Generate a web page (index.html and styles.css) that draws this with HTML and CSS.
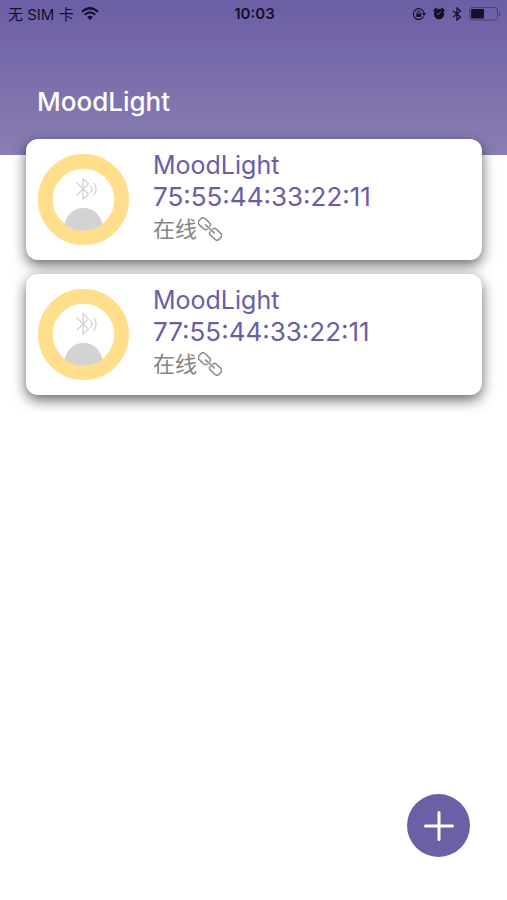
FILE: index.html
```html
<!DOCTYPE html>
<html lang="zh-CN">
<head>
<meta charset="utf-8">
<meta name="viewport" content="width=device-width, initial-scale=1">
<title>MoodLight</title>
<link rel="stylesheet" href="styles.css">
</head>
<body>
<svg class="defs" aria-hidden="true">
  <symbol id="lamp" viewBox="0 0 90 90">
    <clipPath id="lamp-hole"><circle cx="45" cy="45" r="31"/></clipPath>
    <circle cx="45" cy="45" r="37.7" fill="#fff" stroke="#ffdf8c" stroke-width="14.6"/>
    <circle cx="45" cy="72" r="18.7" fill="#d3d3d3" clip-path="url(#lamp-hole)"/>
    <g fill="none" stroke="#d2cfd1" stroke-width="1.2" stroke-linecap="round" stroke-linejoin="round">
      <path d="M38.5 28.5 50 39.5 44.5 44.5V24.5L50 29.5 38.5 40.5"/>
      <path d="M52 31.5Q54.5 34.5 52 38M55.500 29Q59.500 34.500 55.500 40.500"/>
    </g>
  </symbol>
  <symbol id="link" viewBox="0 0 24 24">
    <g transform="rotate(43 12 12)" fill="none" stroke="#8b8b8b" stroke-width="1.5" stroke-linecap="round" stroke-linejoin="round">
      <path d="M10 14V14.500Q9.500 16.200 7.500 16.200H1.500Q-1.700 16.200-1.700 13V11Q-1.700 7.800 1.500 7.800H7.500Q9.500 7.800 10 9.500V10"/>
      <path d="M14 10V9.500Q14.500 7.800 16.500 7.800H22.500Q25.700 7.800 25.700 11V13Q25.700 16.200 22.500 16.200H16.500Q14.500 16.200 14 14.500V14"/>
      <path d="M6 12H18"/>
    </g>
  </symbol>
</svg>
<header class="header">
  <div class="status">
    <div class="status-side">
      <span>无 SIM 卡</span>
      <svg width="18" height="13" viewBox="0 0 18 13" aria-hidden="true">
        <g fill="none" stroke="#15112a" stroke-width="2.200">
          <path d="M1 4.800Q9-2.300 17 4.800"/>
          <path d="M3.700 7.700Q9 3 14.300 7.700"/>
        </g>
        <path d="M6 10Q9 7.400 12 10L9 13Z" fill="#15112a"/>
      </svg>
    </div>
    <time class="clock">10:03</time>
    <div class="status-side status-right">
      <svg width="14" height="14" viewBox="0 0 14 14" aria-hidden="true">
        <path d="M11.600 9.500A5.400 5.400 0 1 1 12 5.500" fill="none" stroke="#15112a" stroke-width="1.200"/>
        <path d="M10 6h4l-2 3z" fill="#15112a"/>
        <path d="M4.300 6.500h5v3.500h-5z" fill="#15112a"/>
        <path d="M5.300 6.500V5Q6.800 2.800 8.300 5V6.500" fill="none" stroke="#15112a"/>
      </svg>
      <svg width="12" height="13" viewBox="0 0 12 13" aria-hidden="true">
        <circle cx="6" cy="7" r="5.200" fill="#15112a"/>
        <path d="M1.200 3.400 3.200 1.600M10.800 3.400 8.800 1.600" stroke="#15112a" stroke-width="1.800" stroke-linecap="round"/>
        <path d="M7.500 4.500 6 7.200H4" fill="none" stroke="#7467a9" stroke-width=".8"/>
      </svg>
      <svg width="10" height="14" viewBox="0 0 10 14" aria-hidden="true">
        <path d="M1 4 8.500 10 5 13V1L8.500 4 1 10" fill="none" stroke="#15112a" stroke-width="1.300"/>
      </svg>
      <svg class="battery" width="32" height="14" viewBox="0 0 32 14" aria-hidden="true">
        <rect x=".5" y=".5" width="28" height="12.500" rx="2.500" fill="none" stroke="#4b4173"/>
        <rect x="2" y="2" width="13" height="9.500" rx="1" fill="#15112a"/>
        <path d="M30 4.500Q32.500 7 30 9.500Z" fill="#4b4173"/>
      </svg>
    </div>
  </div>
  <h1 class="title">MoodLight</h1>
</header>
<main class="devices">
  <article class="card">
    <svg class="lamp" aria-hidden="true"><use href="#lamp"/></svg>
    <div class="info">
      <h2 class="name">MoodLight</h2>
      <p class="address">75:55:44:33:22:11</p>
      <p class="state">在线<svg class="link" aria-hidden="true"><use href="#link"/></svg></p>
    </div>
  </article>
  <article class="card">
    <svg class="lamp" aria-hidden="true"><use href="#lamp"/></svg>
    <div class="info">
      <h2 class="name">MoodLight</h2>
      <p class="address">77:55:44:33:22:11</p>
      <p class="state">在线<svg class="link" aria-hidden="true"><use href="#link"/></svg></p>
    </div>
  </article>
</main>
<button class="add" type="button" aria-label="添加设备">
  <svg width="30" height="30" viewBox="0 0 30 30" aria-hidden="true">
    <path d="M15 1.500V28.500M1.500 15H28.500" stroke="#fff" stroke-width="3" stroke-linecap="round"/>
  </svg>
</button>
</body>
</html>
```

FILE: styles.css
```css
* {
  box-sizing: border-box;
}

body {
  margin: 0;
  min-height: 100vh;
  background: #fff;
  font-family: Inter, "Noto Sans CJK SC", sans-serif;
}

h1,
h2,
p {
  margin: 0;
  font-weight: 400;
}

svg {
  flex: none;
}

.defs {
  position: absolute;
  width: 0;
  height: 0;
}

.header {
  padding-bottom: 36px;
  background: linear-gradient(#6c5ea4, #8a7eb3);
}

.status {
  display: grid;
  grid-template-columns: 1fr auto 1fr;
  align-items: center;
  height: 27px;
  padding: 0 6px 0 8px;
  color: #15112a;
  font-size: 15px;
}

.status-side {
  display: flex;
  align-items: center;
  gap: 7px;
}

.status-right {
  justify-content: flex-end;
}

.clock {
  font-weight: 600;
}

.title {
  margin-top: 58px;
  padding: 0 37px;
  color: #fff;
  font-size: 26px;
  font-weight: 500;
  line-height: 34px;
}

.devices {
  display: flex;
  flex-direction: column;
  gap: 14px;
  margin-top: -16px;
  padding: 0 25px 0 26px;
}

.card {
  display: flex;
  align-items: flex-start;
  gap: 24px;
  padding: 10px 12px 15px;
  border-radius: 12px;
  background: #fff;
  box-shadow: 0 5px 14px rgba(0, 0, 0, 0.6);
}

.lamp {
  width: 91px;
  height: 91px;
  margin-top: 5px;
}

.name,
.address {
  color: #6b5da5;
  font-size: 26px;
  line-height: 32px;
}

.name {
  font-size: 25px;
}

.state {
  display: flex;
  align-items: center;
  color: #858585;
  font-size: 22px;
  line-height: 32px;
}

.link {
  width: 24px;
  height: 24px;
  margin-left: 1px;
}

#link {
  overflow: visible;
}

.add {
  position: fixed;
  right: 37px;
  bottom: 43px;
  display: grid;
  place-items: center;
  width: 63px;
  height: 63px;
  padding: 0;
  border: 0;
  border-radius: 50%;
  background: #6d5fa6;
}
```
